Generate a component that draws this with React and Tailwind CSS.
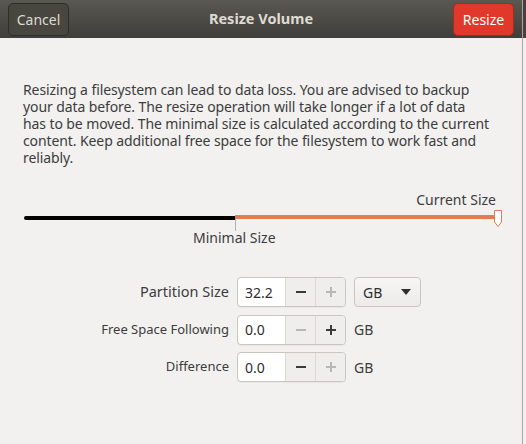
import React from "react";

const font = { fontFamily: '"Noto Sans", "DejaVu Sans", sans-serif' };

function Spin({ value, minusOn, plusOn }) {
  return (
    <div className="flex h-[30px] w-[109px] rounded-[4px] border border-[#c9c5bf] bg-white shadow-[0_1px_0_rgba(0,0,0,0.04)]">
      <div className="flex w-[47px] items-center pl-[7px] text-[14px] text-[#2e2e2e]">{value}</div>
      <div className="flex w-[30px] items-center justify-center border-l border-[#dcd9d4] bg-[#efeeec]">
        <span className={`block h-[2px] w-[10px] ${minusOn ? "bg-[#3a3a3a]" : "bg-[#b9b7b3]"}`} />
      </div>
      <div className="relative flex w-[30px] items-center justify-center rounded-r-[4px] border-l border-[#dcd9d4] bg-[#efeeec]">
        <span className={`absolute h-[2px] w-[10px] ${plusOn ? "bg-[#3a3a3a]" : "bg-[#b9b7b3]"}`} />
        <span className={`absolute h-[10px] w-[2px] ${plusOn ? "bg-[#3a3a3a]" : "bg-[#b9b7b3]"}`} />
      </div>
    </div>
  );
}

export default function App() {
  return (
    <div
      className="flex h-[444px] w-[526px] bg-[linear-gradient(to_bottom,#4a3f3a_38px,#f2f1f0_38px)]"
      style={font}
    >
      <div className="flex h-full w-[523px] flex-col border-r border-[#a9a6a1] bg-[#f2f1f0]">
        <div className="flex h-[38px] items-center justify-between bg-gradient-to-b from-[#5a5852] to-[#3f3e3a] px-[8px]">
          <div className="flex h-[33px] w-[61px] items-center justify-center rounded-[5px] border border-[#2e2d2a] bg-[#47463f] text-[14px] text-[#dfdbd2]">
            Cancel
          </div>
          <div className="text-[14.5px] font-bold text-[#dfdbd2]">Resize Volume</div>
          <div className="flex h-[33px] w-[61px] items-center justify-center rounded-[5px] border border-[#a52a1f] bg-[#e0392b] text-[14px] text-white">
            Resize
          </div>
        </div>

        <div className="px-[23px] pt-[43px] text-[14px] leading-[17px] tracking-[-0.1px] text-[#3c3c3c]">
          Resizing a filesystem can lead to data loss. You are advised to backup
          <br />
          your data before. The resize operation will take longer if a lot of data
          <br />
          has to be moved. The minimal size is calculated according to the current
          <br />
          content. Keep additional free space for the filesystem to work fast and
          <br />
          reliably.
        </div>

        <div className="mt-[24px] flex justify-end pr-[26px] text-[14px] leading-[20px] text-[#3c3c3c]">Current Size</div>

        <div className="relative mx-[24px] h-[30px]">
          <div className="absolute left-0 top-[6px] h-[4px] w-[212px] rounded-l-full bg-black" />
          <div className="absolute left-[211px] top-[5px] h-[1px] w-[262px] bg-[#9a9794]" />
          <div className="absolute left-[211px] top-[6px] h-[3px] w-[262px] bg-[#e27a52]" />
          <div className="absolute left-[211px] top-[9px] h-[12px] w-[1px] bg-[#b5b2ae]" />
          <svg className="absolute left-[469px] top-[-1px]" width="10" height="19" viewBox="0 0 10 19">
            <path d="M1.5 1.5 H8.5 V13 L5 17.5 L1.5 13 Z" fill="#ffffff" stroke="#e27a52" strokeWidth="1" />
          </svg>
        </div>

        <div className="-mt-[12px] pl-[193px] text-[14px] leading-[20px] text-[#3c3c3c]">Minimal Size</div>

        <div className="mt-[29px] grid grid-cols-[229px_109px_auto] items-center gap-x-[8px] gap-y-[7.5px]">
          <div className="text-right text-[14.5px] text-[#3c3c3c]">Partition Size</div>
          <Spin value="32.2" minusOn={true} plusOn={false} />
          <div className="flex h-[30px] w-[67px] items-center justify-between rounded-[4px] border border-[#c9c5bf] bg-gradient-to-b from-[#f7f6f5] to-[#edebe9] pl-[8px] pr-[9px] text-[14px] text-[#2e2e2e]">
            GB
            <svg width="10" height="6" viewBox="0 0 10 6"><path d="M0 0 H10 L5 6 Z" fill="#2e2e2e" /></svg>
          </div>

          <div className="text-right text-[13px] text-[#3c3c3c]">Free Space Following</div>
          <Spin value="0.0" minusOn={false} plusOn={true} />
          <div className="text-[14px] text-[#3c3c3c]">GB</div>

          <div className="text-right text-[13px] text-[#3c3c3c]">Difference</div>
          <Spin value="0.0" minusOn={true} plusOn={false} />
          <div className="text-[14px] text-[#3c3c3c]">GB</div>
        </div>
      </div>
    </div>
  );
}
